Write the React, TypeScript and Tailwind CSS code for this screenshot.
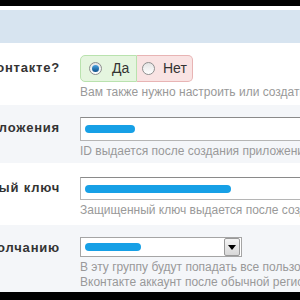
import React from "react";

function Label({ text, top }: { text: string; top: string }) {
  return (
    <div className={`w-[60px] shrink-0 flex justify-end ${top}`}>
      <span className="whitespace-nowrap text-[13px] font-bold text-[#333] leading-[16px] tracking-[0.8px]">{text}</span>
    </div>
  );
}

function Hint({ lines }: { lines: string[] }) {
  return (
    <div className="text-[12px] leading-[15px] text-[#999] whitespace-nowrap">
      {lines.map((l) => (
        <div key={l}>{l}</div>
      ))}
    </div>
  );
}

function Scribble({ w }: { w: number }) {
  return <div className="h-[8px] rounded-full bg-[#17a0e6]" style={{ width: w }} />;
}

function Radio({ checked }: { checked: boolean }) {
  return (
    <span className="w-[13px] h-[13px] rounded-full border border-[#8e8f8f] bg-gradient-to-b from-[#e4e4e4] to-white flex items-center justify-center">
      {checked && <span className="w-[7px] h-[7px] rounded-full bg-gradient-to-b from-[#4aa3df] to-[#0b4f8a]" />}
    </span>
  );
}

export default function App() {
  return (
    <div className="w-[300px] h-[300px] overflow-hidden bg-white font-['Liberation_Sans',Arial,sans-serif]">
      <div className="h-[6px] bg-black" />
      <div className="h-[4px] bg-white" />
      <div className="h-[33px] bg-[#d7e4f0]" />

      {/* row 1 */}
      <div className="h-[62px] bg-white flex gap-[20px] pt-[12px]">
        <Label text="Авторизация через ВКонтакте?" top="pt-[5px]" />
        <div className="flex flex-col gap-[3px]">
          <div className="flex h-[27px] text-[14px] text-[#333]">
            <div className="w-[57px] flex items-center gap-[10px] pl-[8px] bg-[#e5f5df] border border-[#b9e2ae] rounded-l-[5px]">
              <Radio checked />
              <span>Да</span>
            </div>
            <div className="w-[56px] flex items-center gap-[8px] pl-[5px] bg-[#f9e3e3] border border-l-0 border-[#e8b4b4] rounded-r-[5px]">
              <Radio checked={false} />
              <span>Нет</span>
            </div>
          </div>
          <Hint lines={["Вам также нужно настроить или создать приложение"]} />
        </div>
      </div>

      {/* row 2 */}
      <div className="h-[58px] bg-[#f4f6f9] flex gap-[20px] pt-[12px]">
        <Label text="ID приложения" top="pt-[3px]" />
        <div className="flex flex-col gap-[3px] flex-1">
          <div className="h-[24px] w-[240px] bg-white border border-[#b5b5b5] border-t-[#8a8a8a] flex items-center pl-[4px]">
            <Scribble w={50} />
          </div>
          <Hint lines={["ID выдается после создания приложения"]} />
        </div>
      </div>

      {/* row 3 */}
      <div className="h-[62px] bg-white flex gap-[20px] pt-[14px]">
        <Label text="Защищенный ключ" top="pt-[3px]" />
        <div className="flex flex-col gap-[3px] flex-1">
          <div className="h-[23px] w-[240px] bg-white border border-[#b5b5b5] border-t-[#8a8a8a] flex items-center pl-[4px]">
            <Scribble w={146} />
          </div>
          <Hint lines={["Защищенный ключ выдается после создания приложения"]} />
        </div>
      </div>

      {/* row 4 */}
      <div className="h-[67px] bg-[#f4f6f9] flex gap-[20px] pt-[12px]">
        <Label text="Группа по умолчанию" top="pt-[3px]" />
        <div className="flex flex-col gap-[3px] flex-1">
          <div className="h-[20px] w-[162px] bg-white border border-[#a5a5a5] flex items-center">
            <div className="flex-1 pl-[4px]">
              <Scribble w={56} />
            </div>
            <div className="w-[16px] h-[18px] mr-[1px] bg-gradient-to-b from-[#f4f4f4] to-[#d8d8d8] border border-[#9a9a9a] rounded-[2px] flex items-center justify-center">
              <span className="w-0 h-0 border-l-[4px] border-r-[4px] border-t-[5px] border-l-transparent border-r-transparent border-t-black" />
            </div>
          </div>
          <Hint
            lines={[
              "В эту группу будут попадать все пользователи, которые привязали свой",
              "Вконтакте аккаунт после обычной регистрации",
            ]}
          />
        </div>
      </div>
      <div className="h-[8px] bg-black" />
    </div>
  );
}
